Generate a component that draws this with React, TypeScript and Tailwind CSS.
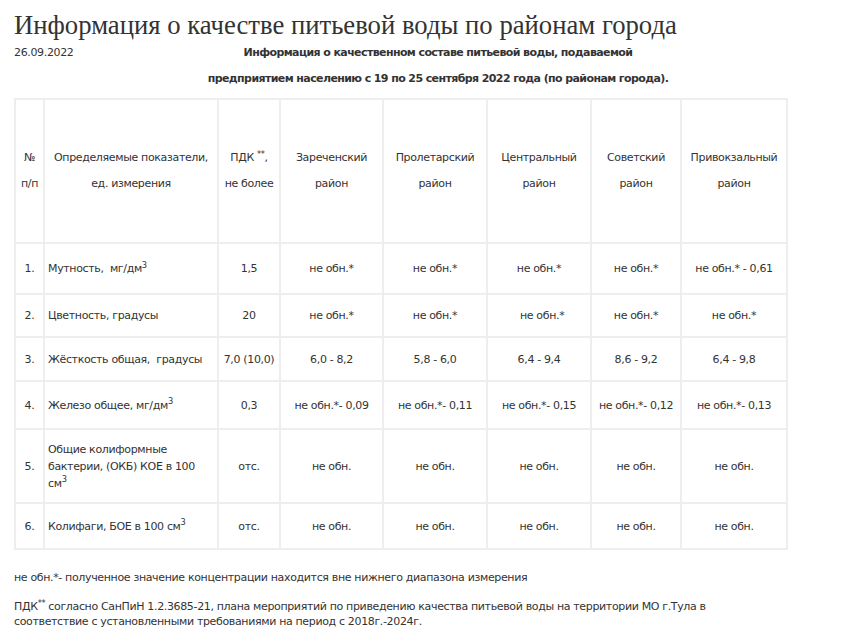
const rows: { n: string; name: React.ReactNode; pdk: string; vals: string[]; h: string }[] = [
  {
    n: "1.",
    name: (
      <>
        Мутность,&nbsp; мг/дм<sup>3</sup>
      </>
    ),
    pdk: "1,5",
    vals: ["не обн.*", "не обн.*", "не обн.*", "не обн.*", "не обн.* - 0,61"],
    h: "h-[51px]",
  },
  {
    n: "2.",
    name: "Цветность, градусы",
    pdk: "20",
    vals: ["не обн.*", "не обн.*", "\u00a0\u00a0не обн.*", "не обн.*", "не обн.*"],
    h: "h-[43px]",
  },
  {
    n: "3.",
    name: "Жёсткость общая,\u00a0 градусы",
    pdk: "7,0 (10,0)",
    vals: ["6,0 - 8,2", "5,8 - 6,0", "6,4 - 9,4", "8,6 - 9,2", "6,4 - 9,8"],
    h: "h-[44px]",
  },
  {
    n: "4.",
    name: (
      <>
        Железо общее, мг/дм<sup>3</sup>
      </>
    ),
    pdk: "0,3",
    vals: ["не обн.*- 0,09", "не обн.*- 0,11", "не обн.*- 0,15", "не обн.*- 0,12", "не обн.*- 0,13"],
    h: "h-[48px]",
  },
  {
    n: "5.",
    name: (
      <>
        Общие колиформные
        <br />
        бактерии, (ОКБ) КОЕ в 100
        <br />
        см<sup>3</sup>
      </>
    ),
    pdk: "отс.",
    vals: ["не обн.", "не обн.", "не обн.", "не обн.", "не обн."],
    h: "h-[74px]",
  },
  {
    n: "6.",
    name: (
      <>
        Колифаги, БОЕ в 100 см<sup>3</sup>
      </>
    ),
    pdk: "отс.",
    vals: ["не обн.", "не обн.", "не обн.", "не обн.", "не обн."],
    h: "h-[46px]",
  },
];

const districts = ["Зареченский", "Пролетарский", "Центральный", "Советский", "Привокзальный"];

const cell = "border-2 border-[#eeeeee] align-middle";

export default function App() {
  return (
    <div className="min-h-screen bg-white px-[14px] text-[#333] font-['DejaVu_Sans',sans-serif] text-[11px] tracking-[-0.35px]">
      <h1 className="pt-[10px] font-['Liberation_Serif',serif] text-[26.7px] leading-[30px] tracking-normal text-[#333]">
        Информация о качестве питьевой воды по районам города
      </h1>

      <div className="flex leading-[26px]">
        <div className="w-[60px]">26.09.2022</div>
        <div className="w-[728px] text-center font-bold tracking-[-0.6px]">
          Информация о качественном составе питьевой воды, подаваемой
          <br />
          предприятием населению с 19 по 25 сентября 2022 года (по районам города).
        </div>
      </div>

      <table className="mt-[6px] w-[772px] table-fixed border-collapse">
        <colgroup>
          <col className="w-[29px]" />
          <col className="w-[174px]" />
          <col className="w-[62px]" />
          <col className="w-[103px]" />
          <col className="w-[104px]" />
          <col className="w-[104px]" />
          <col className="w-[90px]" />
          <col className="w-[106px]" />
        </colgroup>
        <tbody>
          <tr className="h-[144px] leading-[26px]">
            <td className={`${cell} text-center`}>
              №
              <br />
              п/п
            </td>
            <td className={`${cell} text-center`}>
              Определяемые показатели,
              <br />
              ед. измерения
            </td>
            <td className={`${cell} text-center`}>
              ПДК <sup>**</sup>,
              <br />
              не более
            </td>
            {districts.map((d) => (
              <td key={d} className={`${cell} text-center`}>
                {d}
                <br />
                район
              </td>
            ))}
          </tr>
          {rows.map((r) => (
            <tr key={r.n} className={`${r.h} leading-[17px]`}>
              <td className={`${cell} text-center`}>{r.n}</td>
              <td className={`${cell} pl-[3px] text-left`}>{r.name}</td>
              <td className={`${cell} text-center`}>{r.pdk}</td>
              {r.vals.map((v, i) => (
                <td key={i} className={`${cell} text-center`}>
                  {v}
                </td>
              ))}
            </tr>
          ))}
        </tbody>
      </table>

      <p className="mt-[20px] leading-[15px]">
        не обн.*- полученное значение концентрации находится вне нижнего диапазона измерения
      </p>
      <p className="mt-[14px] leading-[15px]">
        ПДК<sup>**</sup> согласно СанПиН 1.2.3685-21, плана мероприятий по приведению качества питьевой воды на территории МО г.Тула в
        <br />
        соответствие с установленными требованиями на период с 2018г.-2024г.
      </p>
    </div>
  );
}
